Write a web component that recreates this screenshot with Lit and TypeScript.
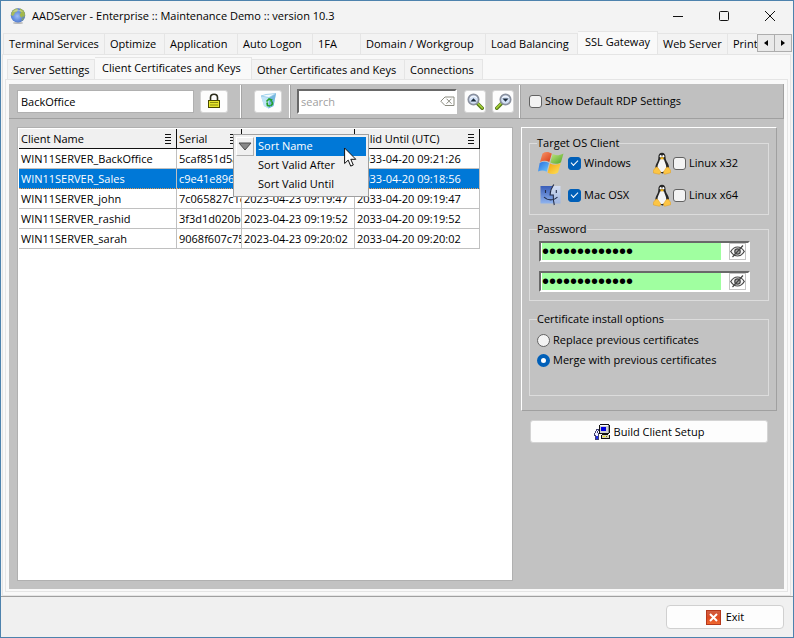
import { LitElement, html, css, svg, nothing } from "lit";
import { customElement, state } from "lit/decorators.js";
import { classMap } from "lit/directives/class-map.js";

interface Tab {
  label: string;
  size: string;
}

interface ClientRow {
  name: string;
  serial: string;
  after: string;
  until: string;
}

const mainTabs: Tab[] = [
  { label: "Terminal Services", size: "w102" },
  { label: "Optimize", size: "w60" },
  { label: "Application", size: "w73" },
  { label: "Auto Logon", size: "w75" },
  { label: "1FA", size: "w48" },
  { label: "Domain / Workgroup", size: "w125" },
  { label: "Load Balancing", size: "w92" },
  { label: "SSL Gateway", size: "w80" },
  { label: "Web Server", size: "w70" },
  { label: "Printer", size: "w60" },
];

const subTabs: Tab[] = [
  { label: "Server Settings", size: "w88" },
  { label: "Client Certificates and Keys", size: "w157" },
  { label: "Other Certificates and Keys", size: "w153" },
  { label: "Connections", size: "w78" },
];

const rows: ClientRow[] = [
  { name: "WIN11SERVER_BackOffice", serial: "5caf851d5a07", after: "2023-04-23 09:21:26", until: "2033-04-20 09:21:26" },
  { name: "WIN11SERVER_Sales", serial: "c9e41e896b12", after: "2023-04-23 09:18:56", until: "2033-04-20 09:18:56" },
  { name: "WIN11SERVER_john", serial: "7c065827c1e4", after: "2023-04-23 09:19:47", until: "2033-04-20 09:19:47" },
  { name: "WIN11SERVER_rashid", serial: "3f3d1d020b6f", after: "2023-04-23 09:19:52", until: "2033-04-20 09:19:52" },
  { name: "WIN11SERVER_sarah", serial: "9068f607c75a", after: "2023-04-23 09:20:02", until: "2033-04-20 09:20:02" },
];

const columns = ["Client Name", "Serial", "Valid After (UTC)", "Valid Until (UTC)"];

const globeIcon = html`<svg width="16" height="16" viewBox="0 0 16 16" aria-hidden="true">
  <defs><radialGradient id="g" cx=".45" cy=".55" r=".6"><stop offset="0" stop-color="#9dbcf5" /><stop offset=".7" stop-color="#5580d4" /><stop offset="1" stop-color="#3d62b4" /></radialGradient></defs>
  <ellipse cx="8" cy="15" rx="5" ry="1" fill="#b9b9b9" />
  <circle cx="8" cy="7.4" r="7.2" fill="url(#g)" />
  <path d="M1.500 4.500C2.800 1.800 5 .6 7.500.4L8 2 6.500 4 5 4.500 4 7 2.500 8 1 7z" fill="#a9bb59" />
  <path d="M10 .6c2.400.7 4.300 2.400 5 5.200L14.500 9l-2-.5L11.500 10 9.500 7 11 4.500 9.500 3z" fill="#a3b84c" />
  <path d="M12.500 10l1.500-1-1 3-1.500.8z" fill="#90aa50" />
  <path d="M3 4c1-2 3-2.500 5-2.500S12 2.500 13 4c-3-1-7-1-10 0z" fill="#fff" opacity=".35" />
</svg>`;

const lockIcon = html`<svg width="14" height="16" viewBox="0 0 14 16" aria-hidden="true">
  <path d="M3.500 8V4.500C3.500 2.500 5 1.200 7 1.200s3.500 1.300 3.500 3.300V8" fill="none" stroke="#2c2c1c" stroke-width="1.600" />
  <rect x="1.500" y="7.500" width="11" height="7" fill="#e6e62c" stroke="#4a4a00" />
  <path d="M3 9.500h8M3 12h8" stroke="#8d8d12" />
</svg>`;

const recycleIcon = html`<svg width="17" height="16" viewBox="0 0 17 16" aria-hidden="true">
  <path d="M1 3l5-1.500L16 .5 13.500 13 8.500 15.500 4 13z" fill="#a9d8f1" />
  <path d="M1 3l8 1.500-.5 11L4 13z" fill="#c0e4f7" />
  <path d="M9 4.500L16 .5 13.500 13 8.500 15.500z" fill="#77b7e0" />
  <path d="M1 3l5-1.500L16 .5 9 4.500z" fill="#f2fbff" stroke="#8cc5e6" stroke-width=".7" />
  <path d="M6.500 8.500L9 6l2.500 1-1 1.500M7 9.500l.5 3 2.500.5M12 8.500l.5 2.500-2 2" fill="none" stroke="#22a12b" stroke-width="1.700" />
</svg>`;

const lensIcon = (up: boolean) => html`<svg width="17" height="17" viewBox="0 0 17 17" aria-hidden="true">
  <g class=${up ? "" : "flip"}>
    <path d="M10.500 10.500l4.700 4.700" stroke="#557a18" stroke-width="3.600" stroke-linecap="round" />
    <path d="M11 10.500l4.300 4.500" stroke="#a6d038" stroke-width="1.700" stroke-linecap="round" />
    <circle cx="6.500" cy="6.500" r="5.200" fill="#d3e1f6" stroke="#8a919f" stroke-width="1.700" />
    <path d="M3.200 5c1.500-2 5-2.200 6.600 0" stroke="#fff" fill="none" />
  </g>
  ${up
    ? svg`<path d="M3.500 8.500h6L6.500 5.200z" fill="#182838" />`
    : svg`<path d="M7.500 5.500h6l-3 3.300z" fill="#182838" />`}
</svg>`;

const clearIcon = html`<svg width="15" height="11" viewBox="0 0 15 11" aria-hidden="true">
  <path d="M5 1h9v8.500H5L.8 5.200zM6.500 2.700l5 5M11.500 2.700l-5 5" fill="none" stroke="#8b8b80" />
</svg>`;

const windowsIcon = html`<svg width="26" height="24" viewBox="0 0 26 24" aria-hidden="true">
  <defs>
    <linearGradient id="wr" x1="0" y1="0" x2="1" y2="1"><stop stop-color="#f8996b" /><stop offset="1" stop-color="#d93a14" /></linearGradient>
    <linearGradient id="wg" x1="0" y1="0" x2="1" y2="1"><stop stop-color="#c5e683" /><stop offset="1" stop-color="#4da621" /></linearGradient>
    <linearGradient id="wb" x1="0" y1="0" x2="1" y2="1"><stop stop-color="#2a6fe0" /><stop offset="1" stop-color="#6bc7fb" /></linearGradient>
    <linearGradient id="wy" x1="0" y1="0" x2="1" y2="1"><stop stop-color="#f4a20e" /><stop offset="1" stop-color="#fde45c" /></linearGradient>
  </defs>
  <path d="M4.500 2.500c3-2 6-2 9.300.1L11.300 11c-3-1.800-6-1.700-9.300 0z" fill="url(#wr)" />
  <path d="M14.600 3.100c3 1.600 6.500 1.600 10.900-.6L23 11.200c-3 2-6.700 2-10.700.3z" fill="url(#wg)" />
  <path d="M1.700 12c3-1.600 6-1.600 9.300 0L8.700 20.800c-3-1.800-5.700-1.700-8.700-.2z" fill="url(#wb)" />
  <path d="M12 12.500c3.500 1.600 7 1.600 10.700-.2L20 21.500c-3 2-6.800 2-10.400.2z" fill="url(#wy)" />
</svg>`;

const macIcon = html`<svg width="26" height="24" viewBox="0 0 26 24" aria-hidden="true">
  <defs>
    <linearGradient id="ml" x1="0" y1="0" x2="0" y2="1"><stop stop-color="#395db8" /><stop offset="1" stop-color="#8fb3ee" /></linearGradient>
    <linearGradient id="mr" x1="0" y1="0" x2="0" y2="1"><stop stop-color="#d5def2" /><stop offset="1" stop-color="#9db4df" /></linearGradient>
  </defs>
  <path d="M2.500 3h12c-2 3.500-2.500 6-2.500 9h3c-.2 3 0 6 .7 8.500H2.500z" fill="url(#ml)" />
  <path d="M14.500 3H22.500v17.500h-6.800c-.7-3-.9-5.500-.7-8.500h-3c0-3 .5-5.500 2.500-9z" fill="url(#mr)" />
  <path d="M15.800 1.500c-2.500 3.500-3.700 6.500-3.700 10.500h3.200c-.2 4 0 6.500 1 10M7.500 7v3M18.300 7v3M6 14c3.500 3.800 10 3.800 13.500 0" fill="none" stroke="#222c4a" stroke-width="1.100" />
</svg>`;

const tuxIcon = html`<svg width="18" height="23" viewBox="0 0 18 23" aria-hidden="true">
  <path d="M9 .7c2.400 0 3.500 1.800 3.500 4 0 2.700.8 4 2.200 6.300 1.500 2.500 1.800 5.500.8 8l-6 2.500L3 19c-1.200-2.500-.8-5.300.6-7.800C4.900 9 5.400 7.500 5.400 4.700 5.400 2.500 6.600.7 9 .7z" fill="#262626" />
  <path d="M7 7.500l2-.7 2 .7c.5 2.500 2.300 4.500 2.300 8 0 2.500-1.800 4.500-4.300 4.500s-4.600-2-4.600-4.500C4.400 12 6.500 10 7 7.500z" fill="#f5f5f5" />
  <ellipse cx="7.700" cy="4.300" rx="1" ry="1.300" fill="#fff" /><ellipse cx="10.300" cy="4.300" rx="1" ry="1.300" fill="#fff" />
  <path d="M6.800 6L9 5l2.200 1L9 7.800z" fill="#f3b417" />
  <path d="M.3 18.500l2.700-3.500 1.800.5 3.200 4.700-1.500 2.100L.5 21z" fill="#fcc545" stroke="#e09c1a" stroke-width=".5" />
  <path d="M17.700 18.500L15.200 15l-2 .7-2.900 4.500 1.200 2.100 6-1.500z" fill="#fcc545" stroke="#e09c1a" stroke-width=".5" />
</svg>`;

const eyeIcon = html`<svg width="15" height="15" viewBox="0 0 15 15" aria-hidden="true">
  <path d="M.7 7.500C3 3.800 5 3 7.500 3s4.700 1 6.800 4.500C12.200 11 10 12 7.500 12S2.800 11 .7 7.500z" fill="#f4f4f4" stroke="#444" stroke-width="1.200" />
  <circle cx="7.500" cy="7.500" r="2.700" fill="#aaa" stroke="#444" stroke-width="1.200" />
  <path d="M13 1.500L2.500 13" stroke="#444" stroke-width="1.200" />
</svg>`;

const setupIcon = html`<svg width="16" height="16" viewBox="0 0 16 16" shape-rendering="crispEdges" aria-hidden="true">
  <path d="M6 0h9v1h1v8h-1v1h-1v1h2v4h-9v-4h1v-1H5V1h1z" fill="#111" />
  <path d="M6 1h8v8H6z" fill="#cfcfcf" /><path d="M6 1h8v1H6z" fill="#fff" /><path d="M14 1h1v8h-1z" fill="#909090" />
  <path d="M7 3h5v4H7z" fill="#0000e0" />
  <path d="M8 11h7v3H8z" fill="#d4d0b4" /><path d="M9 12h2v1H9z" fill="#f4ec00" /><path d="M12 12h1v1h-1z" fill="#808000" />
  <path d="M2 5h3v2H4v2h1v7H1v-4H0V9h1V7h1z" fill="#404070" />
  <path d="M3 6h1v1H3zM2 7h1v2H2zM1 9h3v2H1zM2 11h2v4H2z" fill="#f0f0ff" />
  <path d="M2 12h2v3H2z" fill="#2030e8" />
</svg>`;

const exitIcon = html`<svg width="15" height="15" viewBox="0 0 15 15" aria-hidden="true">
  <defs><linearGradient id="ex" x1="0" y1="0" x2="0" y2="1"><stop stop-color="#cf6046" /><stop offset=".5" stop-color="#dd4a22" /><stop offset="1" stop-color="#f06a30" /></linearGradient></defs>
  <rect x=".5" y=".5" width="14" height="14" fill="url(#ex)" stroke="#b5381c" />
  <path d="M4 4l7 7M11 4l-7 7" stroke="#fff" stroke-width="2" />
</svg>`;

const linesIcon = html`<svg width="7" height="10" viewBox="0 0 7 10" aria-hidden="true" shape-rendering="crispEdges">
  <path d="M0 0h6v1H0zM0 3h6v1H0zM0 6h6v1H0zM0 9h6v1H0z" fill="#111" />
</svg>`;

const sortIcon = html`<svg width="14" height="9" viewBox="0 0 14 9" aria-hidden="true">
  <path d="M1 1h12L7 8z" fill="#888" stroke="#4a4a4a" stroke-linejoin="round" />
</svg>`;

const pointerIcon = html`<svg width="13" height="21" viewBox="0 0 13 21" aria-hidden="true">
  <path d="M.6 1v15.500l3.600-3.400 2.500 6 2.600-1.100-2.500-5.700h5z" fill="#fff" stroke="#111" />
</svg>`;

@customElement("app-root")
export class AppRoot extends LitElement {
  @state() private selected = 1;
  @state() private mainTab = "SSL Gateway";
  @state() private subTab = "Client Certificates and Keys";

  static styles = css`
    :host {
      display: flex;
      flex-direction: column;
      box-sizing: border-box;
      min-height: 100vh;
      border: 1px solid #4d82ad;
      background: #f3f3f3;
      color: #000;
      font: 11px/16px "Open Sans", "Noto Sans", sans-serif;
      overflow: hidden;
    }
    * { box-sizing: border-box; }
    button, input { font: inherit; color: inherit; margin: 0; }
    button { border: 0; padding: 0; display: flex; align-items: center; justify-content: center; background: none; white-space: nowrap; }
    svg { display: block; flex: none; }
    .titlebar { display: flex; align-items: center; height: 30px; padding-left: 9px; flex: none; }
    .title { flex: 1; margin: 0 0 0 6px; font: inherit; white-space: nowrap; }
    .wbtn { width: 46px; height: 28px; }
    .tabs { display: flex; align-items: flex-end; flex: none; }
    .maintabs { height: 23px; padding-left: 2px; margin-right: 1px; overflow: hidden; }
    .subtabs { height: 22px; padding-left: 2px; }
    .tab { height: 21px; flex: none; padding: 0 0 0 5px; justify-content: flex-start; background: #f3f3f3; border: 1px solid #e5e5e5; border-left-width: 0; border-bottom: 0; overflow: hidden; }
    .subtabs .tab { height: 20px; }
    .tab:first-child { border-left-width: 1px; }
    .tab.on, .subtabs .tab.on { height: 100%; background: #f9f9f9; padding: 0 0 2px 7px; }
    .w48 { width: 48px; } .w60 { width: 60px; } .w70 { width: 70px; } .w73 { width: 73px; }
    .w75 { width: 75px; } .w78 { width: 78px; } .w80 { width: 80px; } .w88 { width: 88px; }
    .w92 { width: 92px; } .w102 { width: 102px; } .w125 { width: 125px; }
    .w153 { width: 153px; } .w157 { width: 157px; }
    .strip { display: flex; flex: 1; height: 100%; min-width: 0; align-items: flex-end; overflow: hidden; }
    .spin { display: flex; flex: none; align-self: center; }
    .spin button { width: 18px; height: 18px; border: 1px solid #adadad; background: #e9e9e9; }
    .spin button + button { margin-left: -1px; }
    .page { flex: 1; display: flex; flex-direction: column; margin: 0 2px 0 1px; padding: 2px 2px 3px 2px; background: #f9f9f9; border: 1px solid #e5e5e5; }
    .subpage { flex: 1; display: flex; flex-direction: column; padding: 4px 3px 2px 3px; border: 1px solid #e5e5e5; background: #f9f9f9; }
    .client { flex: 1; display: flex; flex-direction: column; background: #c2c2c2; }
    .toolbar { display: flex; align-items: center; height: 35px; flex: none; padding: 0 8px; background: #c0c0c0; border-right: 1px solid #a0a0a0; border-bottom: 1px solid #a0a0a0; }
    .name { width: 177px; height: 23px; padding: 0 3px; border: 1px solid #b0b0b0; background: #fff; }
    .tool { height: 23px; width: 28px; border-radius: 3px; border: 1px solid #d4d4d4; background: #fdfdfd; margin-left: 6px; }
    .tool.small { width: 22px; }
    .sep { width: 2px; height: 33px; background: #fff; border-right: 1px solid #a6a6a6; margin-left: 12px; margin-right: 6px; }
    .sep.tight { margin: 0 6px 0 7px; }
    .sep.mid { margin: 0 8px 0 5px; }
    .search { display: flex; align-items: center; width: 160px; height: 25px; background: #fff; border: 2px solid #fff; border-top-color: #696969; border-left-color: #696969; }
    .search input { flex: 1; min-width: 0; height: 20px; border: 0; outline: 0; padding: 1px 0 0 2px; background: none; }
    .search input::placeholder { color: #a0a0a0; opacity: 1; }
    .after { margin-left: 7px; }
    .flip { transform: translateX(17px) scaleX(-1); }
    label { display: inline-flex; align-items: center; gap: 3px; white-space: nowrap; }
    input[type="checkbox"], input[type="radio"] { appearance: none; flex: none; width: 13px; height: 13px; border: 1px solid #626262; border-radius: 3px; background: #f3f3f3; }
    input[type="radio"] { border-radius: 50%; }
    input[type="checkbox"]:checked { border-color: #005fb8; background: #005fb8; display: grid; place-items: center; }
    input[type="checkbox"]:checked::after { content: ""; width: 6px; height: 3px; border: solid #fff; border-width: 0 0 1px 1px; transform: rotate(-45deg); margin-bottom: 2px; }
    input[type="radio"]:checked { border: 4px solid #005fb8; background: #fff; }
    .body { flex: 1; display: grid; grid-template-columns: minmax(0, 1fr) 256px; gap: 8px; padding: 8px 7px 8px 8px; }
    .list { position: relative; background: #fff; border: 1px solid #b0b0b0; padding: 1px; }
    table { width: 461px; table-layout: fixed; border-collapse: separate; border-spacing: 0; }
    .c0 { width: 158px; } .c1 { width: 65px; } .c2 { width: 113px; } .c3 { width: 125px; }
    th, td { height: 20px; padding: 0 2px; font-weight: 400; text-align: left; white-space: nowrap; overflow: hidden; border-right: 1px solid #c0c0c0; border-bottom: 1px solid #c0c0c0; }
    th { background: #f0f0f0; border-color: #111; }
    th .head { padding-right: 2px; }
    .head { display: flex; justify-content: space-between; align-items: center; }
    tr.on td { background: #0078d7; color: #fff; border-bottom: 1px dotted #e69a55; }
    .menu { position: absolute; left: 215px; top: 6px; width: 136px; padding: 2px; background: #f0f0f0; border: 1px solid #a0a0a0; }
    .item { width: 100%; height: 19px; justify-content: flex-start; padding-left: 20px; }
    .item.on { padding-left: 0; }
    .item .mark { width: 18px; height: 19px; margin-right: 2px; display: grid; place-items: center; border: 1px solid #b0b0b0; border-top-color: #fff; border-left-color: #fff; }
    .item .text { height: 19px; flex: 1; text-align: left; padding: 1px 2px 0; }
    .item.on .text { background: #0078d7; color: #fff; }
    .pointer { position: absolute; left: 110px; top: 12px; }
    .side { display: flex; flex-direction: column; gap: 9px; }
    .panel { display: flex; flex-direction: column; border: 1px solid #a0a0a0; border-top-color: #fff; border-left-color: #fff; padding: 7px 7px 14px 7px; height: 284px; }
    fieldset { margin: 0; min-width: 0; border: 1px solid #dcdcdc; padding: 0 8px 7px 8px; }
    legend { padding: 0; margin-left: -1px; height: 16px; }
    .os { display: grid; grid-template-columns: 115px 1fr; row-gap: 8px; }
    .oscell { display: flex; align-items: center; height: 24px; gap: 4px; }
    .oscell.lin { gap: 2px; }
    .pw { margin-top: 6px; padding: 4px 18px 8px 9px; }
    .pw legend { margin-left: -2px; }
    .field { display: flex; align-items: center; height: 21px; background: #fff; border: 2px solid #fff; border-top-color: #696969; border-left-color: #696969; }
    .field + .field { margin-top: 9px; }
    .field input { flex: 1; min-width: 0; height: 17px; border: 0; outline: 0; padding: 0; margin-left: 1px; background: #a0ffa0; font: 20px/17px "Liberation Sans", sans-serif; }
    .field button { width: 17px; height: 17px; border: 1px solid #c4c4c4; margin: 0 2px 0 8px; }
    .opts { margin-top: 10px; flex: 1; padding: 3px 7px; }
    .opts legend { margin-left: 0; }
    .opts label { display: flex; height: 20px; }
    .wide { height: 23px; border-radius: 3px; border: 1px solid #d4d4d4; background: #fdfdfd; margin: 0 9px; gap: 4px; }
    .footer { display: flex; justify-content: flex-end; align-items: center; height: 41px; flex: none; padding-right: 9px; background: #f0f0f0; border-top: 1px solid #a0a0a0; }
    .exit { width: 118px; height: 24px; border-radius: 4px; border: 1px solid #d0d0d0; background: #fdfdfd; gap: 5px; }
  `;

  private tab(t: Tab, active: string, pick: (label: string) => void) {
    const on = t.label === active;
    return html`<button role="tab" aria-selected=${on} class=${classMap({ tab: true, on, [t.size]: true })} @click=${() => pick(t.label)}>${t.label}</button>`;
  }

  private row(r: ClientRow, i: number) {
    return html`<tr class=${i === this.selected ? "on" : ""} @click=${() => (this.selected = i)}>
      <td>${r.name}</td><td>${r.serial}</td><td>${r.after}</td><td>${r.until}</td>
    </tr>`;
  }

  render() {
    return html`
      <header class="titlebar">
        ${globeIcon}
        <h1 class="title">AADServer - Enterprise :: Maintenance Demo :: version 10.3</h1>
        <button class="wbtn" aria-label="Minimize"><svg width="10" height="10" viewBox="0 0 10 10"><path d="M0 5.500h10" stroke="#111" /></svg></button>
        <button class="wbtn" aria-label="Maximize"><svg width="10" height="10" viewBox="0 0 10 10"><rect x=".5" y=".5" width="9" height="9" rx="1" fill="none" stroke="#111" /></svg></button>
        <button class="wbtn" aria-label="Close"><svg width="10" height="10" viewBox="0 0 10 10"><path d="M0 0l10 10M10 0L0 10" stroke="#111" /></svg></button>
      </header>
      <nav class="tabs maintabs">
        <div class="strip" role="tablist">${mainTabs.map((t) => this.tab(t, this.mainTab, (l) => (this.mainTab = l)))}</div>
        <div class="spin">
          <button aria-label="Scroll left"><svg width="4" height="6" viewBox="0 0 4 6"><path d="M4 0v6L0 3z" /></svg></button>
          <button aria-label="Scroll right"><svg width="4" height="6" viewBox="0 0 4 6"><path d="M0 0v6l4-3z" /></svg></button>
        </div>
      </nav>
      <main class="page">
        <div class="tabs subtabs" role="tablist">${subTabs.map((t) => this.tab(t, this.subTab, (l) => (this.subTab = l)))}</div>
        <div class="subpage">
          <div class="client">
            <div class="toolbar">
              <input class="name" aria-label="Client name" value="BackOffice" />
              <button class="tool" aria-label="Create key">${lockIcon}</button>
              <span class="sep"></span>
              <button class="tool" aria-label="Delete">${recycleIcon}</button>
              <span class="sep tight"></span>
              <div class="search"><input type="text" aria-label="Search" placeholder="search" /><button aria-label="Clear">${clearIcon}</button></div>
              <button class="tool small after" aria-label="Find previous">${lensIcon(true)}</button>
              <button class="tool small" aria-label="Find next">${lensIcon(false)}</button>
              <span class="sep mid"></span>
              <label><input type="checkbox" />Show Default RDP Settings</label>
            </div>
            <div class="body">
              <section class="list">
                <table>
                  <colgroup>${columns.map((_, i) => html`<col class="c${i}" />`)}</colgroup>
                  <thead><tr>${columns.map((c) => html`<th scope="col"><div class="head"><span>${c}</span>${linesIcon}</div></th>`)}</tr></thead>
                  <tbody>${rows.map((r, i) => this.row(r, i))}</tbody>
                </table>
                <div class="menu" role="menu">
                  ${["Sort Name", "Sort Valid After", "Sort Valid Until"].map(
                    (m, i) => html`<button role="menuitem" class=${classMap({ item: true, on: i === 0 })}>
                      ${i === 0 ? html`<span class="mark">${sortIcon}</span>` : nothing}<span class="text">${m}</span>
                    </button>`
                  )}
                  <span class="pointer">${pointerIcon}</span>
                </div>
              </section>
              <aside class="side">
                <div class="panel">
                  <fieldset>
                    <legend>Target OS Client</legend>
                    <div class="os">
                      <div class="oscell">${windowsIcon}<label><input type="checkbox" checked />Windows</label></div>
                      <div class="oscell lin">${tuxIcon}<label><input type="checkbox" />Linux x32</label></div>
                      <div class="oscell">${macIcon}<label><input type="checkbox" checked />Mac OSX</label></div>
                      <div class="oscell lin">${tuxIcon}<label><input type="checkbox" />Linux x64</label></div>
                    </div>
                  </fieldset>
                  <fieldset class="pw">
                    <legend>Password</legend>
                    <div class="field"><input type="password" aria-label="Password" value="password12345" /><button aria-label="Show password">${eyeIcon}</button></div>
                    <div class="field"><input type="password" aria-label="Repeat password" value="password12345" /><button aria-label="Show repeated password">${eyeIcon}</button></div>
                  </fieldset>
                  <fieldset class="opts">
                    <legend>Certificate install options</legend>
                    <label><input type="radio" name="install" />Replace previous certificates</label>
                    <label><input type="radio" name="install" checked />Merge with previous certificates</label>
                  </fieldset>
                </div>
                <button class="wide">${setupIcon}Build Client Setup</button>
              </aside>
            </div>
          </div>
        </div>
      </main>
      <footer class="footer"><button class="exit">${exitIcon}Exit</button></footer>
    `;
  }
}
